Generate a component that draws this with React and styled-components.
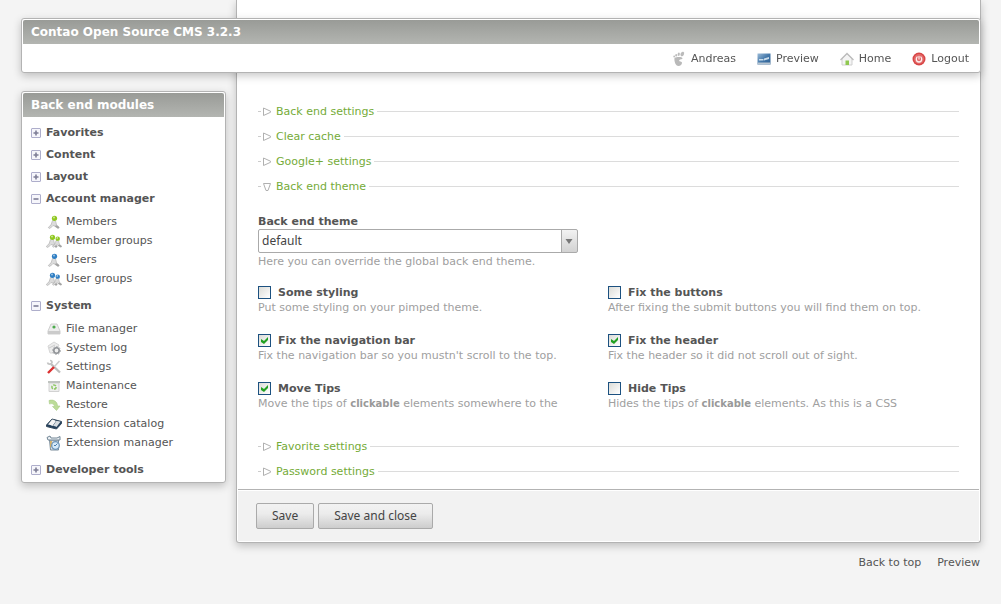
import React from 'react';
import styled, { createGlobalStyle, css } from 'styled-components';

const Global = createGlobalStyle`
  * { box-sizing: border-box; }
  body {
    margin: 0;
    background: #f4f4f4;
    color: #555;
    font: 11px/16px "DejaVu Sans", sans-serif;
  }
`;

const panel = css`
  background: #fff;
  border: 1px solid #b3b3b3;
  border-radius: 3px;
  padding: 1px;
  box-shadow: 0 3px 8px rgba(0, 0, 0, 0.22);
`;

const bar = css`
  margin: 0;
  height: 24px;
  padding: 0 8px;
  border-radius: 2px 2px 0 0;
  background: linear-gradient(#999b97, #b3b5b1);
  color: #fff;
  font-size: 12px;
  line-height: 25px;
  font-weight: bold;
`;

const Header = styled.header`
  ${panel}
  position: fixed;
  z-index: 2;
  top: 18px;
  left: 21px;
  right: 20px;
  height: 55px;
`;

const Title = styled.h1`${bar}`;
const PanelTitle = styled.h2`${bar}`;

const TopNav = styled.nav`
  display: flex;
  justify-content: flex-end;
  gap: 20px;
  padding: 5px 10px 0 0;
`;

const TopLink = styled.a`
  display: flex;
  align-items: center;
  gap: 4px;
  height: 19px;
  color: #555;
  text-decoration: none;
`;

const Page = styled.div`
  display: flex;
  align-items: flex-start;
  gap: 10px;
  padding: 0 20px 0 21px;
`;

const Sidebar = styled.aside`
  ${panel}
  flex: 0 0 205px;
  margin-top: 91px;
`;

const Modules = styled.ul`
  list-style: none;
  margin: 0;
  padding: 5px 8px 0;
`;

const Toggle = styled.button`
  display: flex;
  align-items: center;
  gap: 5px;
  height: 22px;
  padding: 0;
  border: 0;
  background: none;
  color: #555;
  font: bold 11px/16px "DejaVu Sans", sans-serif;
`;

const SubList = styled.ul`
  list-style: none;
  margin: 0;
  padding: 2px 0 7px 15px;
`;

const ModuleLink = styled.a`
  display: flex;
  align-items: center;
  gap: 4px;
  height: 19px;
  color: #555;
  text-decoration: none;
`;

const Column = styled.div`
  flex: 1;
  min-width: 0;
`;

const Main = styled.main`
  ${panel}
  border-top: 0;
  border-radius: 0 0 3px 3px;
  padding-top: 99px;
`;

const Form = styled.form`
  margin: 0;
`;

const Sections = styled.div`
  padding: 0 20px;
`;

const Legend = styled.button`
  display: flex;
  align-items: center;
  width: 100%;
  height: 25px;
  padding: 0;
  border: 0;
  background: none;
  color: #75ab38;
  font: 11px/16px "DejaVu Sans", sans-serif;

  svg { margin-right: 3px; }

  &::after {
    content: "";
    flex: 1;
    height: 1px;
    margin-left: 3px;
    background: #dcdcdc;
  }
`;

const Fields = styled.div`
  display: grid;
  grid-template-columns: 1fr 1fr;
  row-gap: 16px;
  padding: 15px 1px 21px 0;
`;

const Field = styled.div`
  grid-column: ${(p) => (p.$wide ? '1 / -1' : 'auto')};
  height: ${(p) => (p.$wide ? '55px' : '32px')};
`;

const FieldLabel = styled.label`
  display: block;
  height: 15px;
  line-height: 15px;
  font-weight: bold;
`;

const SelectBox = styled.div`
  position: relative;
  width: 320px;
  padding-bottom: 1px;
`;

const Select = styled.select`
  appearance: none;
  display: block;
  width: 100%;
  height: 24px;
  padding: 0 20px 0 3px;
  border: 1px solid #aaa;
  border-radius: 2px;
  background: linear-gradient(#aaa, #aaa) right 15px top / 1px 100% no-repeat,
    linear-gradient(#f2f2f2, #d2d2d2) right top / 15px 100% no-repeat, #fff;
  color: #444;
  font: 12px/20px "Noto Sans", sans-serif;
`;

const SelectArrow = styled.svg`
  position: absolute;
  right: 5px;
  top: 10px;
  pointer-events: none;
`;

const Hint = styled.p`
  margin: 0;
  color: #a0a0a0;
  line-height: 15px;
  white-space: nowrap;

  b {
    font-size: 10px;
    color: #999;
  }
`;

const CheckLabel = styled.label`
  display: flex;
  align-items: center;
  gap: 7px;
  height: 15px;
  font-weight: bold;
`;

const Checkbox = styled.input`
  appearance: none;
  width: 13px;
  height: 13px;
  margin: 0;
  border: 1px solid #1c5180;
  background: linear-gradient(135deg, #dcdcd7, #fff);
  display: grid;
  place-items: center;

  &:checked::before {
    content: "";
    width: 7px;
    height: 7px;
    background: #21a121;
    clip-path: polygon(0 28%, 43% 58%, 100% 0, 100% 43%, 43% 100%, 0 72%);
  }
`;

const Submit = styled.div`
  display: flex;
  gap: 4px;
  padding: 12px 18px;
  margin-top: 5px;
  border-top: 1px solid #b3b3b3;
  background: #f2f2f2;
  box-shadow: inset 0 1px #fff;
  height: 52px;
`;

const Button = styled.button`
  height: 26px;
  margin-top: 1px;
  padding: 0 15px;
  border: 1px solid #aaa;
  border-radius: 2px;
  background: linear-gradient(#f2f2f2, #ececec 40%, #cdcdcd);
  color: #444;
  font: 12px/20px "Noto Sans", sans-serif;
`;

const Footer = styled.footer`
  display: flex;
  justify-content: flex-end;
  gap: 16px;
  padding: 12px 1px 33px 0;
`;

const FooterLink = styled.a`
  color: #555;
  text-decoration: none;
`;

const Icon = ({ children, w = 16, h = 16 }) => (
  <svg width={w} height={h} viewBox={`0 0 ${w} ${h}`} aria-hidden="true">{children}</svg>
);

const Fold = ({ open }) => (
  <Icon w={10} h={10}>
    <rect x="0.5" y="0.5" width="9" height="9" rx="0.5" fill="#f6f6fb" stroke="#aeaecb" />
    <path d={open ? 'M2.500 5H7.500' : 'M2.500 5H7.500M5 2.500V7.500'} stroke="#7d7d96" strokeWidth="1.600" />
  </Icon>
);

const Person = ({ color, x = 0, s = 1 }) => (
  <g transform={`translate(${x} ${s === 1 ? 0 : 2}) scale(${s})`}>
    <path d="M6.500 6.500C8 5.800 10 6.500 10 8.500L10.500 11 13 13C13.500 14 12.500 14.600 11.500 14.200L8.500 12 7 11.500 4.500 14C3.500 14.800 2 14.200 2.600 13L5 11Z" fill="#dcdcdc" stroke="#b4b4b4" strokeWidth="0.700" />
    <path d="M8.500 12L11.500 14.200C12.500 14.600 13.500 14 13 13L10.800 11.200Z" fill="#a2a2a2" />
    <circle cx="8.500" cy="4.300" r="2.600" fill={color} />
    <circle cx="8" cy="3.400" r="1" fill="#fff" opacity="0.550" />
  </g>
);

const Group = ({ color }) => (
  <Icon><Person color={color} x={-2} /><Person color={color} x={4.5} s={0.85} /></Icon>
);

const icons = {
  member: <Icon><Person color="#8fc81f" /></Icon>,
  memberGroup: <Group color="#8fc81f" />,
  user: <Icon><Person color="#2f7fc4" /></Icon>,
  userGroup: <Group color="#2f7fc4" />,
  files: (
    <Icon>
      <path d="M5 3H11L14 10V13H2V10Z" fill="#ededed" stroke="#cfcfcf" strokeLinejoin="round" />
      <path d="M2 10H14V13H2Z" fill="#cbcbcb" />
      <circle cx="8" cy="6" r="1.600" fill="#4dab4d" />
    </Icon>
  ),
  log: (
    <Icon>
      <path d="M2 6L8 2 13 5 9 13 4 13Z" fill="#ececec" stroke="#d6d6d6" />
      <path d="M3 8L9 5" stroke="#ccc" />
      <circle cx="10.500" cy="10.500" r="2.700" fill="#eee" stroke="#8f9296" strokeWidth="1.600" />
      <circle cx="10.500" cy="10.500" r="4" fill="none" stroke="#a5a8ab" strokeDasharray="1.500 1.500" />
    </Icon>
  ),
  settings: (
    <Icon>
      <path d="M5 5L14 13.500" stroke="#bdbdbd" strokeWidth="2.400" />
      <path d="M1.500 3.500C2 5.500 5 6 6 3.500 6 2.500 5 1.500 4 1.500" fill="none" stroke="#c4c4c4" strokeWidth="1.700" />
      <path d="M13.500 2L8 8" stroke="#ccc" strokeWidth="1.500" />
      <path d="M8 8L2 14" stroke="#dc3030" strokeWidth="2.400" />
    </Icon>
  ),
  maintenance: (
    <Icon>
      <path d="M3 5H13V13.500H3Z" fill="#eee" stroke="#d2d2d2" />
      <path d="M2 3H14V5H2Z" fill="#c0c4c0" />
      <circle cx="8" cy="9" r="2.100" fill="none" stroke="#8ec866" strokeWidth="1.500" strokeDasharray="3 1" />
    </Icon>
  ),
  restore: (
    <Icon>
      <path d="M3 3.500C8 2 11.500 5 11.500 9H14L10.500 13.500 6.500 9.500H8.500C8.500 7 6 6 3.500 7Z" fill="#bcdc98" stroke="#a9cb88" strokeWidth="0.600" />
    </Icon>
  ),
  catalog: (
    <Icon>
      <path d="M0.500 9L6 3 15.500 5.500V7.500L10.500 13 0.500 10.500Z" fill="#24415d" stroke="#34495c" strokeLinejoin="round" />
      <path d="M2 8.500L6 3.500Q8.500 3.500 10 5L6.500 10Q4.500 8.500 2 8.500Z" fill="#f5f5f5" />
      <path d="M10.300 5Q12.500 4.700 14.500 5.800L10.500 11Q9 9.800 7 10Z" fill="#d8dde1" />
    </Icon>
  ),
  manager: (
    <Icon>
      <path d="M3.500 5H12.500V15H4.500Z" fill="#dce3e8" stroke="#7a8c9a" />
      <path d="M1 2.500L4 1 5 3H11L14 1.500V5H2Z" fill="#eef2f5" stroke="#708595" />
      <path d="M5 6V12" stroke="#d8a84c" strokeWidth="1.500" />
      <circle cx="9.500" cy="10.500" r="3.800" fill="#d6eafa" stroke="#6e95b8" strokeWidth="1.300" />
      <path d="M11.500 8.500L9 11 8 10" fill="none" stroke="#4c7fab" />
    </Icon>
  ),
  foot: (
    <Icon>
      <path d="M3.500 7C5.500 5.500 11 5.500 11.500 7.200 11.500 8.700 8.500 7.800 8.200 9.500 8.200 11 11 10 11 11.800 11 13.700 9.500 15 7.500 15 4.500 15 3 10 3.500 7Z" fill="#b9b9b9" />
      <ellipse cx="11.300" cy="3" rx="1.700" ry="2.400" fill="#bbb" transform="rotate(25 11.300 3)" />
      <ellipse cx="7.700" cy="3.200" rx="1.100" ry="1.700" fill="#bbb" transform="rotate(10 7.700 3.200)" />
      <ellipse cx="5.200" cy="4.300" rx="0.900" ry="1.300" fill="#bbb" />
      <circle cx="3.200" cy="5.500" r="0.900" fill="#bbb" />
    </Icon>
  ),
  preview: (
    <Icon>
      <defs>
        <linearGradient id="screen" x1="0" y1="0" x2="1" y2="1">
          <stop offset="0" stopColor="#9dbcd8" />
          <stop offset="0.500" stopColor="#4478aa" />
          <stop offset="1" stopColor="#2c5f92" />
        </linearGradient>
      </defs>
      <path d="M1.500 2.500H14.500V13.500H1.500Z" fill="url(#screen)" />
      <path d="M1.500 11.500H14.500V13.500H1.500Z" fill="#b8c6d2" />
      <path d="M3 8H7.500V9.500H3ZM8 7.500L13 6V8L8 9.500Z" fill="#c9dcea" />
    </Icon>
  ),
  home: (
    <Icon>
      <path d="M3 7.500L8 3 13 7.500V14H3Z" fill="#f4f4f4" stroke="#cfcfcf" />
      <path d="M1.500 9L8 2.500 14.500 9" fill="none" stroke="#bdbdbd" strokeWidth="1.300" />
      <path d="M6.500 9.500H10V14H6.500Z" fill="#8fc850" />
    </Icon>
  ),
  logout: (
    <Icon>
      <circle cx="8" cy="8" r="6.500" fill="#d74545" />
      <circle cx="8" cy="8" r="5" fill="#e46a6a" />
      <circle cx="8" cy="8.300" r="2.700" fill="none" stroke="#fff" strokeWidth="1.300" opacity="0.900" />
      <path d="M8 4.500V8.300" stroke="#d74545" strokeWidth="2.600" />
      <path d="M8 4.800V8.500" stroke="#fff" strokeWidth="1.200" />
    </Icon>
  ),
};

const modules = [
  { name: 'Favorites' },
  { name: 'Content' },
  { name: 'Layout' },
  {
    name: 'Account manager',
    items: [['member', 'Members'], ['memberGroup', 'Member groups'], ['user', 'Users'], ['userGroup', 'User groups']],
  },
  {
    name: 'System',
    items: [
      ['files', 'File manager'], ['log', 'System log'], ['settings', 'Settings'], ['maintenance', 'Maintenance'],
      ['restore', 'Restore'], ['catalog', 'Extension catalog'], ['manager', 'Extension manager'],
    ],
  },
  { name: 'Developer tools' },
];

const options = [
  ['styling', 'Some styling', false, 'Put some styling on your pimped theme.'],
  ['buttons', 'Fix the buttons', false, 'After fixing the submit buttons you will find them on top.'],
  ['navigation', 'Fix the navigation bar', true, "Fix the navigation bar so you mustn't scroll to the top."],
  ['header', 'Fix the header', true, 'Fix the header so it did not scroll out of sight.'],
  ['move', 'Move Tips', true, <>Move the tips of <b>clickable</b> elements somewhere to the</>],
  ['hide', 'Hide Tips', false, <>Hides the tips of <b>clickable</b> elements. As this is a CSS</>],
];

const Section = ({ open, children }) => (
  <Legend type="button" aria-expanded={!!open}>
    <Icon w={15} h={10}>
      <path d="M0 4.500H3" stroke="#ccc" />
      <path d={open ? 'M5.500 1.500H12.500L10 8.500H8Z' : 'M5.500 1V8.500L12.500 5.300V4.200Z'} fill="#fff" stroke="#b0b0b0" strokeLinejoin="round" />
    </Icon>
    {children}
  </Legend>
);

export default function App() {
  return (
    <>
      <Global />
      <Header id="top">
        <Title>Contao Open Source CMS 3.2.3</Title>
        <TopNav>
          <TopLink href="#user">{icons.foot}Andreas</TopLink>
          <TopLink href="#preview">{icons.preview}Preview</TopLink>
          <TopLink href="#home">{icons.home}Home</TopLink>
          <TopLink href="#logout">{icons.logout}Logout</TopLink>
        </TopNav>
      </Header>
      <Page>
        <Sidebar>
          <PanelTitle>Back end modules</PanelTitle>
          <Modules>
            {modules.map(({ name, items }) => (
              <li key={name}>
                <Toggle type="button" aria-expanded={!!items}><Fold open={!!items} />{name}</Toggle>
                {items && (
                  <SubList>
                    {items.map(([icon, label]) => (
                      <li key={label}><ModuleLink href={`#${icon}`}>{icons[icon]}{label}</ModuleLink></li>
                    ))}
                  </SubList>
                )}
              </li>
            ))}
          </Modules>
        </Sidebar>
        <Column>
          <Main>
            <Form>
              <Sections>
                <Section>Back end settings</Section>
                <Section>Clear cache</Section>
                <Section>Google+ settings</Section>
                <Section open>Back end theme</Section>
                <Fields>
                  <Field $wide>
                    <FieldLabel htmlFor="theme">Back end theme</FieldLabel>
                    <SelectBox>
                      <Select id="theme" defaultValue="default"><option>default</option></Select>
                      <SelectArrow width="8" height="6" viewBox="0 0 8 6" aria-hidden="true">
                        <path d="M0.500 0H7.500L4 5Z" fill="#777" />
                      </SelectArrow>
                    </SelectBox>
                    <Hint>Here you can override the global back end theme.</Hint>
                  </Field>
                  {options.map(([id, label, on, hint]) => (
                    <Field key={id}>
                      <CheckLabel htmlFor={id}>
                        <Checkbox id={id} type="checkbox" defaultChecked={on} />{label}
                      </CheckLabel>
                      <Hint>{hint}</Hint>
                    </Field>
                  ))}
                </Fields>
                <Section>Favorite settings</Section>
                <Section>Password settings</Section>
              </Sections>
              <Submit>
                <Button type="button">Save</Button>
                <Button type="button">Save and close</Button>
              </Submit>
            </Form>
          </Main>
          <Footer>
            <FooterLink href="#top">Back to top</FooterLink>
            <FooterLink href="#preview">Preview</FooterLink>
          </Footer>
        </Column>
      </Page>
    </>
  );
}
